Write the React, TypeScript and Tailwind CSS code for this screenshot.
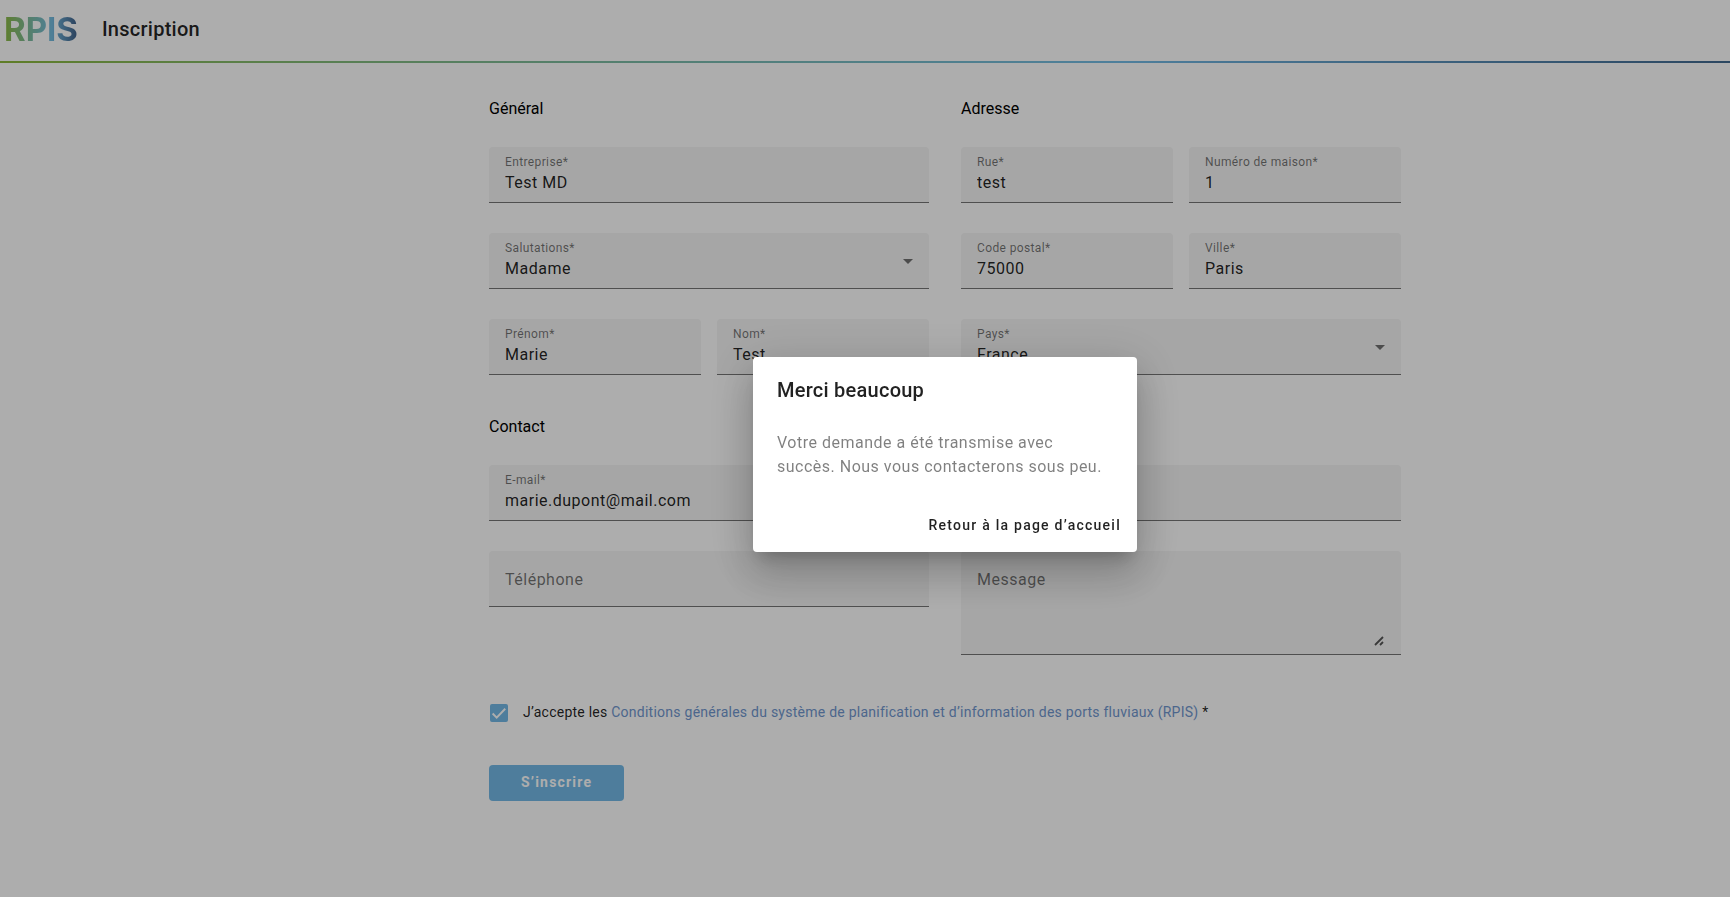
import { useState } from 'react'
import type { ReactNode } from 'react'

const control = 'block w-full bg-transparent px-4 text-base tracking-[0.03125em] text-black/87 outline-none'

function Field({ id, label, floating = true, children }: { id: string; label: string; floating?: boolean; children: ReactNode }) {
  return (
    <div className="relative rounded-t border-b border-[#757575] bg-[#f5f5f5]">
      <label
        htmlFor={id}
        className={
          'pointer-events-none absolute left-4 tracking-[0.03125em] text-black/54 ' +
          (floating ? 'top-[7px] text-xs' : 'top-[17px] text-base leading-6')
        }
      >
        {label}
      </label>
      {children}
    </div>
  )
}

function TextField({ id, label, value = '', type = 'text' }: { id: string; label: string; value?: string; type?: string }) {
  const [text, setText] = useState(value)
  return (
    <Field id={id} label={label} floating={text !== ''}>
      <input id={id} type={type} value={text} onChange={e => setText(e.target.value)} className={control + ' h-[55px] pt-4'} />
    </Field>
  )
}

function SelectField({ id, label, options }: { id: string; label: string; options: string[] }) {
  return (
    <Field id={id} label={label}>
      <select id={id} className={control + ' h-[55px] appearance-none pt-4'}>
        {options.map(o => <option key={o}>{o}</option>)}
      </select>
      <svg className="pointer-events-none absolute right-4 top-[26px]" width="10" height="5" viewBox="0 0 10 5">
        <path d="M0 0h10L5 5z" fill="#000" fillOpacity="0.54" />
      </svg>
    </Field>
  )
}

function Section({ title, children }: { title: string; children: ReactNode }) {
  return (
    <section>
      <h2 className="mb-[26px] text-base leading-6 text-black">{title}</h2>
      <div className="grid gap-[30px]">{children}</div>
    </section>
  )
}

export default function App() {
  const [open, setOpen] = useState(true)
  const [message, setMessage] = useState('')
  const [accepted, setAccepted] = useState(true)

  return (
    <div className="min-h-screen bg-white font-[Roboto,sans-serif]">
      <header>
        <div className="flex h-[61px] items-center gap-6 px-1 pb-[3px]">
          <span className="bg-linear-to-r from-[#8cb93a] via-[#74bbe0] via-65% to-[#3f5f88] bg-clip-text font-[Inter,sans-serif] text-[33px] leading-10 font-bold text-transparent">
            RPIS
          </span>
          <h1 className="text-xl font-medium tracking-[0.0125em] text-black/87">Inscription</h1>
        </div>
        <div className="h-[2px] bg-linear-to-r from-[#8cb93a] via-[#74bbe6] via-65% to-[#42698f]" />
      </header>

      <main className="pl-40">
        <form className="mx-auto max-w-[912px] pt-[34px]" onSubmit={e => e.preventDefault()}>
          <div className="grid grid-cols-2 gap-x-8">
            <Section title="Général">
              <TextField id="company" label="Entreprise*" value="Test MD" />
              <SelectField id="salutation" label="Salutations*" options={['Madame', 'Monsieur']} />
              <div className="grid grid-cols-2 gap-4">
                <TextField id="firstName" label="Prénom*" value="Marie" />
                <TextField id="lastName" label="Nom*" value="Test" />
              </div>
            </Section>
            <Section title="Adresse">
              <div className="grid grid-cols-2 gap-4">
                <TextField id="street" label="Rue*" value="test" />
                <TextField id="houseNumber" label="Numéro de maison*" value="1" />
              </div>
              <div className="grid grid-cols-2 gap-4">
                <TextField id="zip" label="Code postal*" value="75000" />
                <TextField id="city" label="Ville*" value="Paris" />
              </div>
              <SelectField id="country" label="Pays*" options={['France', 'Allemagne', 'Suisse']} />
            </Section>
          </div>

          <div className="mt-10">
            <Section title="Contact">
              <div className="grid grid-cols-2 items-start gap-x-8 gap-y-[30px]">
                <TextField id="email" label="E-mail*" type="email" value="marie.dupont@mail.com" />
                <TextField id="fax" label="Fax" />
                <TextField id="phone" label="Téléphone" type="tel" />
                <Field id="message" label="Message" floating={message !== ''}>
                  <div className="relative px-4 pt-6 pb-2">
                    <textarea
                      id="message"
                      value={message}
                      onChange={e => setMessage(e.target.value)}
                      className="block h-[71px] w-full resize-none bg-transparent text-base tracking-[0.03125em] text-black/87 outline-none"
                    />
                    <svg className="pointer-events-none absolute right-[17px] bottom-2" width="10" height="10" viewBox="0 0 10 10" fill="none">
                      <path d="M1 9l8-8M6 9l3-3" stroke="#555" strokeWidth="1.8" />
                    </svg>
                  </div>
                </Field>
              </div>
            </Section>
          </div>

          <div className="mt-[46px] flex h-6 items-center gap-[15px] text-sm tracking-[0.0178em] text-black/87">
            <span className="relative ml-px size-[18px]">
              <input
                id="terms"
                type="checkbox"
                checked={accepted}
                onChange={e => setAccepted(e.target.checked)}
                className="block size-[18px] appearance-none rounded-xs border-2 border-black/54 checked:border-[#74b9e6] checked:bg-[#74b9e6]"
              />
              {accepted && (
                <svg className="pointer-events-none absolute inset-0" width="18" height="18" viewBox="0 0 24 24" fill="none">
                  <path d="M3.5 12.7l5.4 5.4L20.3 6.3" stroke="#fff" strokeWidth="2.6" />
                </svg>
              )}
            </span>
            <label htmlFor="terms" className="pb-0.5">
              J’accepte les{' '}
              <a href="#conditions" className="text-[#7197cf]">
                Conditions générales du système de planification et d’information des ports fluviaux (RPIS)
              </a>{' '}
              *
            </label>
          </div>

          <button type="submit" className="mt-10 h-9 rounded bg-[#74b9e6] px-8 pb-0.5 text-sm font-bold tracking-[0.085em] text-white">
            S’inscrire
          </button>
        </form>
      </main>

      {open && (
        <div className="fixed inset-0 flex items-center justify-center bg-black/32 pt-3 pl-40">
          <div
            role="dialog"
            aria-modal="true"
            aria-labelledby="dialog-title"
            className="w-96 rounded bg-white shadow-[0_11px_15px_-7px_rgba(0,0,0,0.2),0_24px_38px_3px_rgba(0,0,0,0.14),0_9px_46px_8px_rgba(0,0,0,0.12)]"
          >
            <h2 id="dialog-title" className="px-6 pt-[17px] pb-[5px] text-xl leading-8 font-medium tracking-[0.0125em] text-black/87">
              Merci beaucoup
            </h2>
            <p className="px-6 py-5 text-base leading-6 tracking-[0.03125em] text-black/50">
              Votre demande a été transmise avec succès. Nous vous contacterons sous peu.
            </p>
            <div className="flex justify-end px-2 pt-2 pb-[9px]">
              <button onClick={() => setOpen(false)} className="h-9 rounded px-2 text-sm font-medium tracking-[0.0893em] text-black/87">
                Retour à la page d’accueil
              </button>
            </div>
          </div>
        </div>
      )}
    </div>
  )
}
